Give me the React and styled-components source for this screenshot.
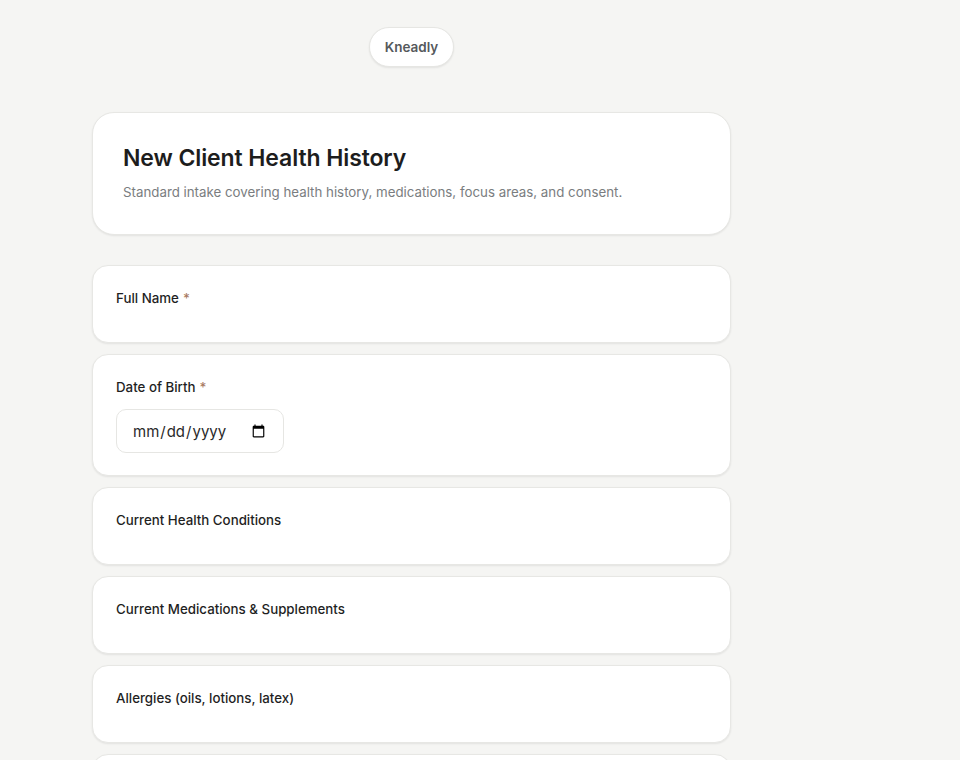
import React from "react";
import styled, { createGlobalStyle } from "styled-components";

const GlobalStyle = createGlobalStyle`
  html, body {
    margin: 0;
    padding: 0;
    background: #f5f5f3;
    font-family: Inter, "Noto Sans", sans-serif;
    color: #1f1f1f;
  }
  * { box-sizing: border-box; }
`;

const Page = styled.div`
  width: 639px;
  margin-left: 92px;
  padding: 27px 0 40px;
  display: flex;
  flex-direction: column;
  align-items: stretch;
`;

const BrandRow = styled.div`
  display: flex;
  justify-content: center;
  margin-bottom: 45px;
`;

const BrandPill = styled.div`
  height: 40px;
  padding: 0 15px;
  display: flex;
  align-items: center;
  background: #ffffff;
  border: 1px solid #e6e6e3;
  border-radius: 20px;
  box-shadow: 0 1px 2px rgba(0, 0, 0, 0.08);
  font-size: 13.5px;
  font-weight: 600;
  color: #55595c;
`;

const HeaderCard = styled.div`
  background: #ffffff;
  border: 1px solid #e7e7e4;
  border-radius: 22px;
  box-shadow: 0 1px 2px rgba(0, 0, 0, 0.08);
  padding: 30px 30px 32px;
  margin-bottom: 30px;
`;

const Title = styled.h1`
  margin: 0 0 9px;
  font-size: 23px;
  line-height: 30px;
  font-weight: 600;
  color: #1d1d1d;
  letter-spacing: -0.1px;
`;

const Subtitle = styled.p`
  margin: 0;
  font-size: 13.3px;
  line-height: 20px;
  color: #7a7d80;
`;

const FieldList = styled.div`
  display: flex;
  flex-direction: column;
  gap: 11px;
`;

const FieldCard = styled.div`
  background: #ffffff;
  border: 1px solid #e7e7e4;
  border-radius: 16px;
  box-shadow: 0 1px 2px rgba(0, 0, 0, 0.08);
  padding: 22px 23px 22px;
  display: flex;
  flex-direction: column;
  gap: 12px;
`;

const Label = styled.label`
  font-size: 13.3px;
  line-height: 20px;
  font-weight: 500;
  color: #1f1f1f;
`;

const Required = styled.span`
  color: #a87a62;
  margin-left: 4px;
`;

const EmptyAnswer = styled.div`
  height: 0;
`;

const DateInput = styled.input`
  width: 168px;
  height: 44px;
  padding: 0 15px;
  border: 1px solid #e6e6e3;
  border-radius: 10px;
  background: #ffffff;
  font-family: Inter, "Noto Sans", sans-serif;
  font-size: 15px;
  color: #2a2a2a;
  outline: none;
`;

const fields = [
  { label: "Full Name", required: true },
  { label: "Date of Birth", required: true, date: true },
  { label: "Current Health Conditions" },
  { label: "Current Medications & Supplements" },
  { label: "Allergies (oils, lotions, latex)" },
  { label: "Areas of Focus" },
  { label: "Consent", required: true },
];

export default function App() {
  return (
    <>
      <GlobalStyle />
      <Page>
        <BrandRow>
          <BrandPill>Kneadly</BrandPill>
        </BrandRow>
        <HeaderCard>
          <Title>New Client Health History</Title>
          <Subtitle>
            Standard intake covering health history, medications, focus areas, and consent.
          </Subtitle>
        </HeaderCard>
        <FieldList>
          {fields.map((f) => (
            <FieldCard key={f.label}>
              <Label>
                {f.label}
                {f.required && <Required>*</Required>}
              </Label>
              {f.date ? <DateInput type="date" /> : <EmptyAnswer />}
            </FieldCard>
          ))}
        </FieldList>
      </Page>
    </>
  );
}
